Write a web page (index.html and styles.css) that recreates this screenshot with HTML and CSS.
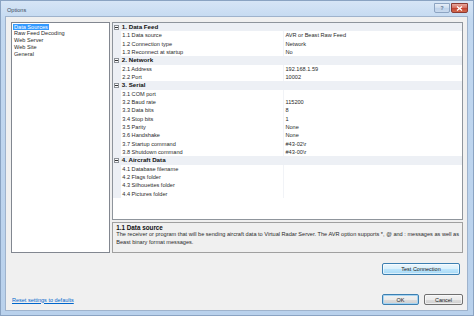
FILE: index.html
```html
<!DOCTYPE html>
<html>
<head>
<meta charset="utf-8">
<title>Options</title>
<link rel="stylesheet" href="styles.css">
</head>
<body>
<div class="window">
  <div class="titlebar">
    <span class="title">Options</span>
    <div class="caption-buttons">
      <span class="cbtn help">?</span>
      <span class="cbtn close"><svg width="7" height="5" viewBox="0 0 7 5"><path d="M1 0.5 L6 4.5 M6 0.5 L1 4.5" stroke="#fff" stroke-width="1.3"/></svg></span>
    </div>
  </div>
  <div class="client">
    <div class="main">
      <ul class="pages">
        <li><span class="item selected">Data Sources</span></li>
        <li><span class="item">Raw Feed Decoding</span></li>
        <li><span class="item">Web Server</span></li>
        <li><span class="item">Web Site</span></li>
        <li><span class="item">General</span></li>
      </ul>
      <div class="right">
        <div class="grid">
          <div class="row cat"><span class="gutter"><span class="toggle"></span></span><span class="cat-name">1. Data Feed</span></div>
          <div class="row"><span class="gutter"></span><span class="name">1.1 Data source</span><span class="value">AVR or Beast Raw Feed</span></div>
          <div class="row"><span class="gutter"></span><span class="name">1.2 Connection type</span><span class="value">Network</span></div>
          <div class="row"><span class="gutter"></span><span class="name">1.3 Reconnect at startup</span><span class="value">No</span></div>
          <div class="row cat"><span class="gutter"><span class="toggle"></span></span><span class="cat-name">2. Network</span></div>
          <div class="row"><span class="gutter"></span><span class="name">2.1 Address</span><span class="value">192.168.1.59</span></div>
          <div class="row"><span class="gutter"></span><span class="name">2.2 Port</span><span class="value">10002</span></div>
          <div class="row cat"><span class="gutter"><span class="toggle"></span></span><span class="cat-name">3. Serial</span></div>
          <div class="row"><span class="gutter"></span><span class="name">3.1 COM port</span><span class="value"></span></div>
          <div class="row"><span class="gutter"></span><span class="name">3.2 Baud rate</span><span class="value">115200</span></div>
          <div class="row"><span class="gutter"></span><span class="name">3.3 Data bits</span><span class="value">8</span></div>
          <div class="row"><span class="gutter"></span><span class="name">3.4 Stop bits</span><span class="value">1</span></div>
          <div class="row"><span class="gutter"></span><span class="name">3.5 Parity</span><span class="value">None</span></div>
          <div class="row"><span class="gutter"></span><span class="name">3.6 Handshake</span><span class="value">None</span></div>
          <div class="row"><span class="gutter"></span><span class="name">3.7 Startup command</span><span class="value">#43-02\r</span></div>
          <div class="row"><span class="gutter"></span><span class="name">3.8 Shutdown command</span><span class="value">#43-00\r</span></div>
          <div class="row cat"><span class="gutter"><span class="toggle"></span></span><span class="cat-name">4. Aircraft Data</span></div>
          <div class="row"><span class="gutter"></span><span class="name">4.1 Database filename</span><span class="value"></span></div>
          <div class="row"><span class="gutter"></span><span class="name">4.2 Flags folder</span><span class="value"></span></div>
          <div class="row"><span class="gutter"></span><span class="name">4.3 Silhouettes folder</span><span class="value"></span></div>
          <div class="row"><span class="gutter"></span><span class="name">4.4 Pictures folder</span><span class="value"></span></div>
        </div>
        <div class="desc">
          <div class="desc-title">1.1 Data source</div>
          <div class="desc-text">The receiver or program that will be sending aircraft data to Virtual Radar Server. The AVR option supports *, @ and : messages as well as<br>Beast binary format messages.</div>
        </div>
      </div>
    </div>
    <div class="test-row">
      <button class="btn hot test">Test Connection</button>
    </div>
    <div class="bottom-row">
      <a class="reset" href="#">Reset settings to defaults</a>
      <div class="dialog-buttons">
        <button class="btn default ok">OK</button>
        <button class="btn cancel">Cancel</button>
      </div>
    </div>
  </div>
</div>
</body>
</html>
```
FILE: styles.css
```css
* { box-sizing: border-box; }
html, body { margin: 0; padding: 0; background: #bcd4ee; }
body {
  font-family: "Liberation Sans", Arial, sans-serif;
  font-size: 5.6px;
  color: #2a2a2a;
}
.window {
  width: 474px;
  height: 316px;
  display: flex;
  flex-direction: column;
  background: linear-gradient(to bottom, #d6e5f6 0px, #c2d8f0 20px, #b9d1ec 100%);
  border: 1px solid #8aa3c2;
}
.titlebar {
  height: 15px;
  flex: none;
  display: flex;
  align-items: flex-start;
  padding-left: 6px;
}
.title {
  font-size: 5.6px;
  color: #3a4a60;
  margin-top: 6px;
}
.caption-buttons {
  margin-left: auto;
  margin-right: 5px;
  margin-top: 2px;
  display: flex;
  gap: 1px;
}
.cbtn {
  height: 10px;
  display: flex;
  align-items: center;
  justify-content: center;
  border-radius: 0 0 2px 2px;
}
.help {
  width: 16px;
  border: 1px solid #8da4c2;
  background: linear-gradient(to bottom, #e6eef8, #cddcee 50%, #bfd2ea 50%, #c9daee);
  color: #56708f;
  font-size: 5px;
  font-weight: bold;
}
.close {
  width: 17px;
  border: 1px solid #8b3a33;
  background: linear-gradient(to bottom, #e8a89c, #d46c5e 50%, #c2402f 50%, #d26a4f);
}
.client {
  flex: 1;
  margin: 0 5px 4px 4px;
  background: #f0f0f0;
  border: 1px solid #9fb3cc;
  display: flex;
  flex-direction: column;
  padding: 5px 4px 5px 5px;
}
.main {
  flex: 1;
  display: flex;
  gap: 2px;
  min-height: 0;
}
.pages {
  width: 101px;
  margin: 0;
  padding: 0.5px 0 0 1px;
  list-style: none;
  background: #fff;
  border: 1px solid #828790;
}
.pages li {
  height: 6.9px;
  line-height: 6.9px;
}
.item {
  display: inline-block;
  padding: 0 1px;
  height: 6.9px;
}
.item.selected {
  background: #3399ff;
  color: #fff;
}
.right {
  flex: 1;
  display: flex;
  flex-direction: column;
  gap: 2px;
}
.grid {
  height: 198px;
  flex: none;
  background: #fff;
  border: 1px solid #8f959c;
  display: flex;
  flex-direction: column;
}
.row {
  height: 8.333px;
  flex: none;
  display: flex;
  align-items: stretch;
  line-height: 8.333px;
  white-space: nowrap;
}
.gutter {
  width: 8px;
  flex: none;
  background: #edf0f5;
  display: flex;
  align-items: center;
  justify-content: center;
}
.name {
  width: 162px;
  flex: none;
  padding-left: 1.5px;
}
.value {
  flex: 1;
  padding-left: 1.7px;
  border-left: 1px solid #f1f3f7;
}
.row.cat {
  background: #edf0f5;
}
.cat-name {
  font-weight: bold;
  font-size: 6.2px;
  padding-left: 1px;
  color: #111;
}
.toggle {
  width: 5px;
  height: 5px;
  border: 1px solid #8e9399;
  background: #fbfbfb;
  display: flex;
  align-items: center;
  justify-content: center;
}
.toggle::after {
  content: "";
  width: 3px;
  height: 1px;
  background: #333;
}
.desc {
  flex: 1;
  border: 1px solid #a0a0a0;
  background: #f0f0f0;
  padding: 0.5px 3px 0 3.5px;
  line-height: 7.8px;
  white-space: nowrap;
}
.desc-title {
  font-weight: bold;
  font-size: 6.3px;
  color: #111;
}
.test-row {
  flex: none;
  height: 12px;
  margin-top: 10px;
  display: flex;
  justify-content: flex-end;
  padding-right: 3px;
}
.bottom-row {
  flex: none;
  height: 11px;
  margin-top: 19px;
  display: flex;
  align-items: center;
}
.reset {
  margin-left: 1px;
  color: #0066cc;
  text-decoration: underline;
  font-size: 5.5px;
}
.dialog-buttons {
  margin-left: auto;
  display: flex;
  gap: 5px;
}
.btn {
  font-family: "Liberation Sans", Arial, sans-serif;
  font-size: 5.5px;
  color: #222;
  padding: 0;
  height: 100%;
  border: 1px solid #707070;
  border-radius: 2px;
  background: linear-gradient(to bottom, #f2f2f2 0%, #ebebeb 50%, #dddddd 50%, #cfcfcf 100%);
  box-shadow: inset 0 0 0 1px rgba(255,255,255,0.6);
}
.btn.test { width: 78px; height: 12px; }
.btn.hot {
  border-color: #3c7fb1;
  background: linear-gradient(to bottom, #eaf6fd 0%, #d9f0fc 50%, #bee6fd 50%, #a7d9f5 100%);
}
.btn.ok { width: 37px; height: 11px; }
.btn.default {
  border-color: #3c7fb1;
  box-shadow: inset 0 0 0 1px #a6d4f2;
}
.btn.cancel { width: 39px; height: 11px; }
```
